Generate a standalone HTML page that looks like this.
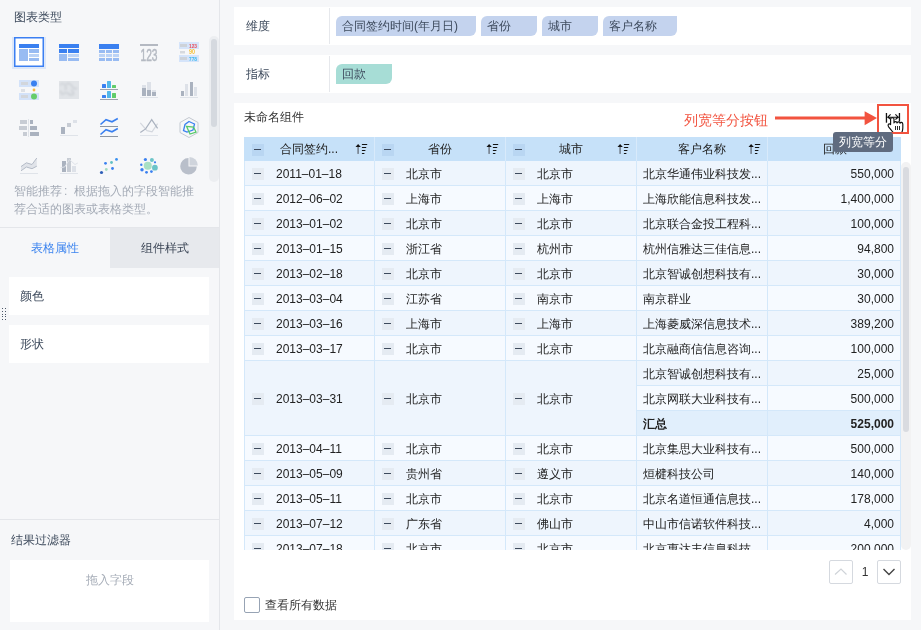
<!DOCTYPE html>
<html><head><meta charset="utf-8">
<style>
*{margin:0;padding:0;box-sizing:border-box}
html,body{width:921px;height:630px;overflow:hidden;background:#f6f7f9;font-family:"Liberation Sans",sans-serif;font-size:12px;color:#333}
.a{position:absolute}
.lbl{position:absolute;font-size:12px;line-height:16px;color:#3d4a5c;white-space:nowrap}
.panel{position:absolute;background:#fff}
.pill{position:absolute;top:16px;height:20px;line-height:20px;padding-left:6px;font-size:12px;color:#3e4b5e;background:#c4d3ee;border-radius:6px 0 6px 0;white-space:nowrap}
.tbl{position:absolute;left:244px;top:161px;width:657px;height:389px;overflow:hidden;background:#d4e8fa}
.c{position:absolute;overflow:hidden;white-space:nowrap;font-size:12px;color:#222}
.c span{top:1px}
.c .mb{position:absolute;left:7px;width:12px;height:12px;background:#e5ebf2}
.c .mb:after{content:"";position:absolute;left:2px;top:5px;width:7px;height:1px;background:#3d4a5c}
.t1{position:absolute;left:31px}
.t4{position:absolute;left:6px}
.t5{position:absolute;right:6px}
.b{font-weight:bold}
.hd{position:absolute;top:137px;height:24px;line-height:24px;background:#c6e1f9;font-size:12px;color:#222;white-space:nowrap;text-align:center}
.hd .mb{position:absolute;left:8px;top:7px;width:12px;height:12px;background:#b9d6f2}
.hd .mb:after{content:"";position:absolute;left:2px;top:5px;width:7px;height:1px;background:#3d4a5c}
.sort{position:absolute;top:6px;width:13px;height:12px}
</style></head><body><div id="root" style="position:absolute;left:0;top:0;width:921px;height:630px;overflow:hidden;will-change:transform">
<!-- LEFT PANEL -->
<div class="a" style="left:219px;top:0;width:1px;height:630px;background:#e4e6ea"></div>
<div class="lbl" style="left:14px;top:9px">图表类型</div>
<!-- selected icon box -->
<div class="a" style="left:12px;top:37px;width:34px;height:32px;background:#dce7f9"></div>
<svg class="a" style="left:12px;top:35px" width="34" height="34"><rect x="2.75" y="2.75" width="28.5" height="28.5" fill="#fff" stroke="#3b7ff2" stroke-width="1.5"/></svg>
<svg class="a" style="left:0;top:0" width="219" height="190" viewBox="0 0 219 190">
 <!-- icon 1 -->
 <rect x="19" y="44" width="20" height="4" fill="#3a80f0"/>
 <rect x="19" y="49" width="9" height="12" fill="#98bbf2"/>
 <rect x="29" y="49" width="10" height="4" fill="#98bbf2"/>
 <rect x="29" y="54" width="10" height="3" fill="#bcd3f6"/>
 <rect x="29" y="58" width="10" height="3" fill="#98bbf2"/>
 <!-- icon 2 -->
 <rect x="59" y="44" width="20" height="4" fill="#3a80f0"/>
 <rect x="59" y="49" width="8" height="4" fill="#3a80f0"/>
 <rect x="68" y="49" width="11" height="4" fill="#3a80f0"/>
 <rect x="59" y="54" width="8" height="7" fill="#98bbf2"/>
 <rect x="68" y="54" width="11" height="3" fill="#bcd3f6"/>
 <rect x="68" y="58" width="11" height="3" fill="#98bbf2"/>
 <!-- icon 3 -->
 <rect x="99" y="44" width="20" height="5" fill="#3a80f0"/>
 <g fill="#98bbf2"><rect x="99" y="50" width="6" height="3"/><rect x="106" y="50" width="6" height="3"/><rect x="113" y="50" width="6" height="3"/>
 <rect x="99" y="58" width="6" height="3"/><rect x="106" y="58" width="6" height="3"/><rect x="113" y="58" width="6" height="3"/></g>
 <g fill="#bcd3f6"><rect x="99" y="54" width="6" height="3"/><rect x="106" y="54" width="6" height="3"/><rect x="113" y="54" width="6" height="3"/></g>
 <!-- icon 4: 123 -->
 <rect x="140" y="44" width="18" height="2" fill="#b4b9c2"/>
 <text x="149" y="60.5" text-anchor="middle" font-family="Liberation Sans" font-size="16" fill="#b4b9c2" stroke="#b4b9c2" stroke-width="0.5" textLength="17" lengthAdjust="spacingAndGlyphs">123</text>
 <!-- icon 5 -->
 <rect x="179" y="42" width="20" height="7" fill="#d5e4fa"/>
 <rect x="179" y="55" width="20" height="7" fill="#d5e4fa"/>
 <rect x="180" y="44" width="7" height="3" fill="#cdd2d9"/>
 <rect x="180" y="51" width="5" height="2.5" fill="#d6d9de"/>
 <rect x="180" y="57" width="7" height="3" fill="#cdd2d9"/>
 <text x="189" y="47.5" font-family="Liberation Sans" font-size="6" font-weight="bold" fill="#ea4f5c" textLength="8" lengthAdjust="spacingAndGlyphs">123</text>
 <text x="189" y="54" font-family="Liberation Sans" font-size="6.5" font-weight="bold" fill="#f5c13c" textLength="6" lengthAdjust="spacingAndGlyphs">90</text>
 <text x="189" y="60.8" font-family="Liberation Sans" font-size="6" font-weight="bold" fill="#3bb8ee" textLength="8" lengthAdjust="spacingAndGlyphs">778</text>
 <!-- icon 6 -->
 <rect x="19" y="80" width="20" height="7" fill="#d3e2f9"/>
 <rect x="19" y="93" width="20" height="7" fill="#d3e2f9"/>
 <rect x="21" y="82" width="7" height="3" fill="#d2d6dc"/>
 <rect x="21" y="89" width="4" height="3" fill="#dde0e5"/>
 <rect x="21" y="95" width="7" height="3" fill="#d2d6dc"/>
 <circle cx="34" cy="83.5" r="3" fill="#3a80f0"/>
 <circle cx="34" cy="90" r="1.4" fill="#f5b942"/>
 <circle cx="34" cy="96.5" r="3" fill="#66cc6a"/>
 <!-- icon 7: map -->
 <defs><filter id="bl" x="-20%" y="-20%" width="140%" height="140%"><feGaussianBlur stdDeviation="0.9"/></filter><clipPath id="mc"><rect x="59" y="81" width="20" height="18"/></clipPath></defs>
 <rect x="59" y="81" width="20" height="18" fill="#e1e4e8"/>
 <g clip-path="url(#mc)" filter="url(#bl)" fill="none" stroke="#c4c8ce" stroke-width="1.1">
  <path d="M60 85 q3 -3 5 0 q2 3 0 5 M66 84 q4 -2 6 2 q2 4 5 2 M62 95 q3 -4 7 -1 q2 2 5 0 M71 90 q3 1 2 4 M60 91 q2 1 1 3"/>
 </g>
 <!-- icon 8 -->
 <rect x="102" y="84" width="4" height="4" rx="0.5" fill="#3a80f0"/><rect x="107" y="81" width="4" height="7" rx="0.5" fill="#52b7ea"/><rect x="112" y="85" width="4" height="3" rx="0.5" fill="#62cc6a"/>
 <rect x="100" y="89" width="18" height="1" fill="#9aa2ad"/>
 <rect x="102" y="95" width="4" height="3" rx="0.5" fill="#3a80f0"/><rect x="107" y="91" width="4" height="7" rx="0.5" fill="#52b7ea"/><rect x="112" y="93" width="4" height="5" rx="0.5" fill="#62cc6a"/>
 <rect x="100" y="99" width="18" height="1" fill="#9aa2ad"/>
 <!-- icon 9 -->
 <rect x="142" y="85" width="4" height="3" fill="#dde1e8"/><rect x="142" y="88" width="4" height="8" fill="#aab2bf"/>
 <rect x="147" y="82" width="4" height="8" fill="#dde1e8"/><rect x="147" y="90" width="4" height="6" fill="#aab2bf"/>
 <rect x="152" y="90" width="4" height="2" fill="#dde1e8"/><rect x="152" y="92" width="4" height="4" fill="#aab2bf"/>
 <rect x="140" y="97" width="18" height="1" fill="#dfe3e9"/>
 <!-- icon 10 -->
 <rect x="181" y="91" width="3" height="5" fill="#aab2bf"/><rect x="185" y="84" width="3" height="12" fill="#dde1e8"/>
 <rect x="190" y="82" width="3" height="14" fill="#aab2bf"/><rect x="194" y="87" width="3" height="9" fill="#dde1e8"/>
 <rect x="180" y="97" width="18" height="1" fill="#dfe3e9"/>
 <!-- icon 11 -->
 <rect x="28" y="119" width="1" height="18" fill="#dfe3e9"/>
 <rect x="20" y="120" width="7" height="4" fill="#c7ccd4"/><rect x="19" y="126" width="8" height="4" fill="#c7ccd4"/><rect x="23" y="132" width="4" height="4" fill="#c7ccd4"/>
 <rect x="30" y="120" width="3" height="4" fill="#aab2bf"/><rect x="30" y="126" width="7" height="4" fill="#aab2bf"/><rect x="30" y="132" width="9" height="4" fill="#aab2bf"/>
 <!-- icon 12 -->
 <rect x="61" y="127" width="4" height="7" fill="#aab2bf"/><rect x="67" y="123" width="4" height="4" fill="#c7ccd4"/><rect x="73" y="120" width="4" height="3" fill="#dde1e8"/>
 <rect x="60" y="135" width="18" height="1" fill="#dfe3e9"/>
 <!-- icon 13 -->
 <path d="M100.5 124.5 L106 119.7 L112 121.8 L117.8 118.5" stroke="#3a80f0" stroke-width="1.6" fill="none"/>
 <rect x="100" y="126" width="18" height="1" fill="#8d96a3"/>
 <path d="M100.5 134.5 L106 129.7 L112 131.8 L117.8 128.5" stroke="#3a80f0" stroke-width="1.6" fill="none"/>
 <rect x="100" y="136" width="18" height="1" fill="#8d96a3"/>
 <!-- icon 14 -->
 <path d="M140.3 122.8 L147 130.6 L152 131.9 L157.6 123.6" stroke="#d3d7de" stroke-width="1.2" fill="none"/>
 <path d="M140.3 132.5 L145.6 128.9 L151.7 119.7 L157.6 128.4" stroke="#aab2bf" stroke-width="1.2" fill="none"/>
 <rect x="140" y="135" width="18" height="1" fill="#dfe3e9"/>
 <!-- icon 15 -->
 <polygon points="189,117.5 198,122.5 198,132.5 189,137.5 180,132.5 180,122.5" stroke="#c3c8d0" stroke-width="1" fill="none"/>
 <polygon points="189,121.5 194.5,124 193,130 187,132 183.5,130.5 185,124.5" stroke="#3a80f0" stroke-width="1.3" fill="none"/>
 <polygon points="186.5,126.3 193.5,127 196,132 190,134" stroke="#57c96a" stroke-width="1.3" fill="none"/>
 <!-- icon 16 -->
 <path d="M21 166.6 L26.4 162.8 L32 164.5 L36.8 158 L36.8 166.2 L32 168.7 L26.4 167 L21 170.8 Z" fill="#e0e3e9"/><path d="M21 166.6 L26.4 162.8 L32 164.5 L36.8 158 M36.8 166.2 L32 168.7 L26.4 167 L21 170.8" fill="none" stroke="#b3bac6" stroke-width="1"/>
 <rect x="20" y="173" width="18" height="1" fill="#dfe3e9"/>
 <!-- icon 17 -->
 <rect x="62" y="161" width="4" height="11" fill="#aab2bf"/><rect x="67" y="158" width="4" height="14" fill="#c7ccd4"/><rect x="72" y="166" width="4" height="6" fill="#dde1e8"/>
 <path d="M60.5 167.6 L64.6 167 L69.5 159.6 L75 164.5 L77.8 163" stroke="#dfe3e9" stroke-width="1" fill="none"/>
 <rect x="60" y="173" width="18" height="1" fill="#dfe3e9"/>
 <!-- icon 18 -->
 <circle cx="101.5" cy="172.5" r="1.6" fill="#2f5fb8"/><circle cx="106.3" cy="169.5" r="1.4" fill="#a6dcc0"/>
 <circle cx="105.5" cy="163.3" r="1.4" fill="#3a80f0"/><circle cx="111.5" cy="162.5" r="1.4" fill="#62c0c4"/>
 <circle cx="112.5" cy="168.5" r="1.4" fill="#3a80f0"/><circle cx="116.5" cy="159.4" r="1.4" fill="#3a90f0"/>
 <!-- icon 19 -->
 <circle cx="147.8" cy="165.8" r="4" fill="#a9e0c4"/><circle cx="154.9" cy="167.7" r="2.9" fill="#6cc4c8"/>
 <circle cx="151.9" cy="159.9" r="2" fill="#6cc4c8"/>
 <g fill="#3a80f0"><circle cx="145.4" cy="159.5" r="1.6"/><circle cx="155" cy="162.3" r="1.1"/><circle cx="141.3" cy="164.7" r="1.2"/><circle cx="142" cy="169.7" r="1.7"/><circle cx="146.5" cy="172.3" r="1.4"/><circle cx="151.4" cy="171.6" r="1.4"/></g>
 <!-- icon 20 -->
 <path d="M188.5 166.5 L188.5 158 A8.3 8.3 0 1 0 196.8 166.5 Z" fill="#b9bfca"/>
 <path d="M189.5 165.5 L189.5 157 A8.3 8.3 0 0 1 197.8 165.5 Z" fill="#cfd4dc"/>
</svg>
<!-- left scrollbar -->
<div class="a" style="left:209px;top:36px;width:10px;height:146px;background:#eceef1;border-radius:5px"></div>
<div class="a" style="left:211px;top:39px;width:6px;height:88px;background:#d5d9df;border-radius:3px"></div>
<div class="lbl" style="left:14px;top:182px;line-height:18px;color:#a4abb6;width:190px;white-space:normal">智能推荐<span style="display:inline-block;width:12px;padding-left:2px">:</span>根据拖入的字段智能推<br>荐合适的图表或表格类型。</div>
<!-- tabs -->
<div class="a" style="left:0;top:227px;width:219px;height:1px;background:#e4e6ea"></div>
<div class="a" style="left:110px;top:228px;width:109px;height:40px;background:#e7e9ed"></div>
<div class="lbl" style="left:0;top:240px;width:110px;text-align:center;color:#3c84ef">表格属性</div>
<div class="lbl" style="left:110px;top:240px;width:109px;text-align:center;color:#3d4757">组件样式</div>
<div class="panel" style="left:9px;top:277px;width:200px;height:38px"></div>
<div class="lbl" style="left:20px;top:288px">颜色</div>
<div class="panel" style="left:9px;top:325px;width:200px;height:38px"></div>
<div class="lbl" style="left:20px;top:336px">形状</div>
<!-- drag dots -->
<svg class="a" style="left:0;top:305px" width="9" height="18">
 <g fill="#4d5869"><rect x="2" y="3" width="1" height="1"/><rect x="5" y="3" width="1" height="1"/><rect x="2" y="6" width="1" height="1"/><rect x="5" y="6" width="1" height="1"/><rect x="2" y="9" width="1" height="1"/><rect x="5" y="9" width="1" height="1"/><rect x="2" y="11" width="1" height="1"/><rect x="5" y="11" width="1" height="1"/><rect x="2" y="14" width="1" height="1"/><rect x="5" y="14" width="1" height="1"/></g>
</svg>
<div class="a" style="left:0;top:519px;width:219px;height:1px;background:#e4e6ea"></div>
<div class="lbl" style="left:11px;top:532px">结果过滤器</div>
<div class="panel" style="left:10px;top:560px;width:199px;height:62px"></div>
<div class="lbl" style="left:10px;top:572px;width:199px;text-align:center;color:#a4abb6">拖入字段</div>

<!-- MAIN: dimension panel -->
<div class="panel" style="left:234px;top:7px;width:677px;height:38px"></div>
<div class="lbl" style="left:246px;top:18px">维度</div>
<div class="a" style="left:329px;top:8px;width:1px;height:36px;background:#e6e8ec"></div>
<div class="pill" style="left:336px;width:140px">合同签约时间(年月日)</div>
<div class="pill" style="left:481px;width:56px">省份</div>
<div class="pill" style="left:542px;width:56px">城市</div>
<div class="pill" style="left:603px;width:74px">客户名称</div>
<div class="panel" style="left:234px;top:55px;width:677px;height:38px"></div>
<div class="lbl" style="left:246px;top:66px">指标</div>
<div class="a" style="left:329px;top:56px;width:1px;height:36px;background:#e6e8ec"></div>
<div class="pill" style="left:336px;top:64px;width:56px;background:#a7ddd6">回款</div>

<!-- MAIN: table panel -->
<div class="panel" style="left:234px;top:103px;width:677px;height:517px"></div>
<div class="lbl" style="left:244px;top:109px;color:#333">未命名组件</div>

<!-- header -->
<div class="a" style="left:244px;top:137px;width:657px;height:24px;background:#c6e1f9"></div>
<div class="hd" style="left:244px;width:130px"><i class="mb"></i>合同签约...</div>
<div class="hd" style="left:375px;width:130px"><i class="mb" style="left:7px"></i>省份</div>
<div class="hd" style="left:506px;width:130px"><i class="mb" style="left:7px"></i>城市</div>
<div class="hd" style="left:637px;width:130px">客户名称</div>
<div class="hd" style="left:768px;width:133px">回款</div>
<div class="a" style="left:374px;top:137px;width:1px;height:24px;background:#d8eafb"></div>
<div class="a" style="left:505px;top:137px;width:1px;height:24px;background:#d8eafb"></div>
<div class="a" style="left:636px;top:137px;width:1px;height:24px;background:#d8eafb"></div>
<div class="a" style="left:767px;top:137px;width:1px;height:24px;background:#d8eafb"></div>
<!-- sort icons -->
<svg class="a" style="left:0;top:0" width="921" height="170">
 <defs><g id="srt">
  <path d="M2.6 0 L5.3 2.9 L0 2.9 Z" fill="#111"/><rect x="1.9" y="2.9" width="1.4" height="7" fill="#6a737f"/>
  <rect x="6.3" y="0" width="5.5" height="1.1" rx="0.5" fill="#111"/>
  <rect x="6.3" y="3" width="4.5" height="1.1" rx="0.5" fill="#111"/>
  <rect x="6.3" y="6" width="3.7" height="1.1" rx="0.5" fill="#111"/>
  <rect x="6.3" y="9" width="2.7" height="1.1" rx="0.5" fill="#111"/>
 </g></defs>
 <use href="#srt" x="355.5" y="144"/>
 <use href="#srt" x="486.5" y="144"/>
 <use href="#srt" x="617.5" y="144"/>
 <use href="#srt" x="748.5" y="144"/>
</svg>

<div class="tbl">
<div style="position:absolute;left:-244px;top:-161px;width:921px;height:630px">
<div class="c" style="left:245px;top:161px;width:129px;height:24px;background:#eef5fd;line-height:24px"><i class="mb" style="top:7px"></i><span class="t1">2011–01–18</span></div>
<div class="c" style="left:375px;top:161px;width:130px;height:24px;background:#eef5fd;line-height:24px"><i class="mb" style="top:7px"></i><span class="t1">北京市</span></div>
<div class="c" style="left:506px;top:161px;width:130px;height:24px;background:#eef5fd;line-height:24px"><i class="mb" style="top:7px"></i><span class="t1">北京市</span></div>
<div class="c" style="left:637px;top:161px;width:130px;height:24px;background:#eef5fd;line-height:24px"><span class="t4">北京华通伟业科技发...</span></div>
<div class="c" style="left:768px;top:161px;width:132px;height:24px;background:#eef5fd;line-height:24px"><span class="t5">550,000</span></div>
<div class="c" style="left:245px;top:186px;width:129px;height:24px;background:#f6faff;line-height:24px"><i class="mb" style="top:7px"></i><span class="t1">2012–06–02</span></div>
<div class="c" style="left:375px;top:186px;width:130px;height:24px;background:#f6faff;line-height:24px"><i class="mb" style="top:7px"></i><span class="t1">上海市</span></div>
<div class="c" style="left:506px;top:186px;width:130px;height:24px;background:#f6faff;line-height:24px"><i class="mb" style="top:7px"></i><span class="t1">上海市</span></div>
<div class="c" style="left:637px;top:186px;width:130px;height:24px;background:#f6faff;line-height:24px"><span class="t4">上海欣能信息科技发...</span></div>
<div class="c" style="left:768px;top:186px;width:132px;height:24px;background:#f6faff;line-height:24px"><span class="t5">1,400,000</span></div>
<div class="c" style="left:245px;top:211px;width:129px;height:24px;background:#eef5fd;line-height:24px"><i class="mb" style="top:7px"></i><span class="t1">2013–01–02</span></div>
<div class="c" style="left:375px;top:211px;width:130px;height:24px;background:#eef5fd;line-height:24px"><i class="mb" style="top:7px"></i><span class="t1">北京市</span></div>
<div class="c" style="left:506px;top:211px;width:130px;height:24px;background:#eef5fd;line-height:24px"><i class="mb" style="top:7px"></i><span class="t1">北京市</span></div>
<div class="c" style="left:637px;top:211px;width:130px;height:24px;background:#eef5fd;line-height:24px"><span class="t4">北京联合金投工程科...</span></div>
<div class="c" style="left:768px;top:211px;width:132px;height:24px;background:#eef5fd;line-height:24px"><span class="t5">100,000</span></div>
<div class="c" style="left:245px;top:236px;width:129px;height:24px;background:#f6faff;line-height:24px"><i class="mb" style="top:7px"></i><span class="t1">2013–01–15</span></div>
<div class="c" style="left:375px;top:236px;width:130px;height:24px;background:#f6faff;line-height:24px"><i class="mb" style="top:7px"></i><span class="t1">浙江省</span></div>
<div class="c" style="left:506px;top:236px;width:130px;height:24px;background:#f6faff;line-height:24px"><i class="mb" style="top:7px"></i><span class="t1">杭州市</span></div>
<div class="c" style="left:637px;top:236px;width:130px;height:24px;background:#f6faff;line-height:24px"><span class="t4">杭州信雅达三佳信息...</span></div>
<div class="c" style="left:768px;top:236px;width:132px;height:24px;background:#f6faff;line-height:24px"><span class="t5">94,800</span></div>
<div class="c" style="left:245px;top:261px;width:129px;height:24px;background:#eef5fd;line-height:24px"><i class="mb" style="top:7px"></i><span class="t1">2013–02–18</span></div>
<div class="c" style="left:375px;top:261px;width:130px;height:24px;background:#eef5fd;line-height:24px"><i class="mb" style="top:7px"></i><span class="t1">北京市</span></div>
<div class="c" style="left:506px;top:261px;width:130px;height:24px;background:#eef5fd;line-height:24px"><i class="mb" style="top:7px"></i><span class="t1">北京市</span></div>
<div class="c" style="left:637px;top:261px;width:130px;height:24px;background:#eef5fd;line-height:24px"><span class="t4">北京智诚创想科技有...</span></div>
<div class="c" style="left:768px;top:261px;width:132px;height:24px;background:#eef5fd;line-height:24px"><span class="t5">30,000</span></div>
<div class="c" style="left:245px;top:286px;width:129px;height:24px;background:#f6faff;line-height:24px"><i class="mb" style="top:7px"></i><span class="t1">2013–03–04</span></div>
<div class="c" style="left:375px;top:286px;width:130px;height:24px;background:#f6faff;line-height:24px"><i class="mb" style="top:7px"></i><span class="t1">江苏省</span></div>
<div class="c" style="left:506px;top:286px;width:130px;height:24px;background:#f6faff;line-height:24px"><i class="mb" style="top:7px"></i><span class="t1">南京市</span></div>
<div class="c" style="left:637px;top:286px;width:130px;height:24px;background:#f6faff;line-height:24px"><span class="t4">南京群业</span></div>
<div class="c" style="left:768px;top:286px;width:132px;height:24px;background:#f6faff;line-height:24px"><span class="t5">30,000</span></div>
<div class="c" style="left:245px;top:311px;width:129px;height:24px;background:#eef5fd;line-height:24px"><i class="mb" style="top:7px"></i><span class="t1">2013–03–16</span></div>
<div class="c" style="left:375px;top:311px;width:130px;height:24px;background:#eef5fd;line-height:24px"><i class="mb" style="top:7px"></i><span class="t1">上海市</span></div>
<div class="c" style="left:506px;top:311px;width:130px;height:24px;background:#eef5fd;line-height:24px"><i class="mb" style="top:7px"></i><span class="t1">上海市</span></div>
<div class="c" style="left:637px;top:311px;width:130px;height:24px;background:#eef5fd;line-height:24px"><span class="t4">上海菱威深信息技术...</span></div>
<div class="c" style="left:768px;top:311px;width:132px;height:24px;background:#eef5fd;line-height:24px"><span class="t5">389,200</span></div>
<div class="c" style="left:245px;top:336px;width:129px;height:24px;background:#f6faff;line-height:24px"><i class="mb" style="top:7px"></i><span class="t1">2013–03–17</span></div>
<div class="c" style="left:375px;top:336px;width:130px;height:24px;background:#f6faff;line-height:24px"><i class="mb" style="top:7px"></i><span class="t1">北京市</span></div>
<div class="c" style="left:506px;top:336px;width:130px;height:24px;background:#f6faff;line-height:24px"><i class="mb" style="top:7px"></i><span class="t1">北京市</span></div>
<div class="c" style="left:637px;top:336px;width:130px;height:24px;background:#f6faff;line-height:24px"><span class="t4">北京融商信信息咨询...</span></div>
<div class="c" style="left:768px;top:336px;width:132px;height:24px;background:#f6faff;line-height:24px"><span class="t5">100,000</span></div>
<div class="c" style="left:245px;top:361px;width:129px;height:74px;background:#eef5fd;line-height:74px"><i class="mb" style="top:32px"></i><span class="t1">2013–03–31</span></div>
<div class="c" style="left:375px;top:361px;width:130px;height:74px;background:#eef5fd;line-height:74px"><i class="mb" style="top:32px"></i><span class="t1">北京市</span></div>
<div class="c" style="left:506px;top:361px;width:130px;height:74px;background:#eef5fd;line-height:74px"><i class="mb" style="top:32px"></i><span class="t1">北京市</span></div>
<div class="c" style="left:637px;top:361px;width:130px;height:24px;background:#eef5fd;line-height:24px"><span class="t4">北京智诚创想科技有...</span></div>
<div class="c" style="left:768px;top:361px;width:132px;height:24px;background:#eef5fd;line-height:24px"><span class="t5">25,000</span></div>
<div class="c" style="left:637px;top:386px;width:130px;height:24px;background:#f6faff;line-height:24px"><span class="t4">北京网联大业科技有...</span></div>
<div class="c" style="left:768px;top:386px;width:132px;height:24px;background:#f6faff;line-height:24px"><span class="t5">500,000</span></div>
<div class="c" style="left:637px;top:411px;width:130px;height:24px;background:#e1effc;line-height:24px"><span class="t4 b">汇总</span></div>
<div class="c" style="left:768px;top:411px;width:132px;height:24px;background:#e1effc;line-height:24px"><span class="t5 b">525,000</span></div>
<div class="c" style="left:245px;top:436px;width:129px;height:24px;background:#f6faff;line-height:24px"><i class="mb" style="top:7px"></i><span class="t1">2013–04–11</span></div>
<div class="c" style="left:375px;top:436px;width:130px;height:24px;background:#f6faff;line-height:24px"><i class="mb" style="top:7px"></i><span class="t1">北京市</span></div>
<div class="c" style="left:506px;top:436px;width:130px;height:24px;background:#f6faff;line-height:24px"><i class="mb" style="top:7px"></i><span class="t1">北京市</span></div>
<div class="c" style="left:637px;top:436px;width:130px;height:24px;background:#f6faff;line-height:24px"><span class="t4">北京集思大业科技有...</span></div>
<div class="c" style="left:768px;top:436px;width:132px;height:24px;background:#f6faff;line-height:24px"><span class="t5">500,000</span></div>
<div class="c" style="left:245px;top:461px;width:129px;height:24px;background:#eef5fd;line-height:24px"><i class="mb" style="top:7px"></i><span class="t1">2013–05–09</span></div>
<div class="c" style="left:375px;top:461px;width:130px;height:24px;background:#eef5fd;line-height:24px"><i class="mb" style="top:7px"></i><span class="t1">贵州省</span></div>
<div class="c" style="left:506px;top:461px;width:130px;height:24px;background:#eef5fd;line-height:24px"><i class="mb" style="top:7px"></i><span class="t1">遵义市</span></div>
<div class="c" style="left:637px;top:461px;width:130px;height:24px;background:#eef5fd;line-height:24px"><span class="t4">烜楗科技公司</span></div>
<div class="c" style="left:768px;top:461px;width:132px;height:24px;background:#eef5fd;line-height:24px"><span class="t5">140,000</span></div>
<div class="c" style="left:245px;top:486px;width:129px;height:24px;background:#f6faff;line-height:24px"><i class="mb" style="top:7px"></i><span class="t1">2013–05–11</span></div>
<div class="c" style="left:375px;top:486px;width:130px;height:24px;background:#f6faff;line-height:24px"><i class="mb" style="top:7px"></i><span class="t1">北京市</span></div>
<div class="c" style="left:506px;top:486px;width:130px;height:24px;background:#f6faff;line-height:24px"><i class="mb" style="top:7px"></i><span class="t1">北京市</span></div>
<div class="c" style="left:637px;top:486px;width:130px;height:24px;background:#f6faff;line-height:24px"><span class="t4">北京名道恒通信息技...</span></div>
<div class="c" style="left:768px;top:486px;width:132px;height:24px;background:#f6faff;line-height:24px"><span class="t5">178,000</span></div>
<div class="c" style="left:245px;top:511px;width:129px;height:24px;background:#eef5fd;line-height:24px"><i class="mb" style="top:7px"></i><span class="t1">2013–07–12</span></div>
<div class="c" style="left:375px;top:511px;width:130px;height:24px;background:#eef5fd;line-height:24px"><i class="mb" style="top:7px"></i><span class="t1">广东省</span></div>
<div class="c" style="left:506px;top:511px;width:130px;height:24px;background:#eef5fd;line-height:24px"><i class="mb" style="top:7px"></i><span class="t1">佛山市</span></div>
<div class="c" style="left:637px;top:511px;width:130px;height:24px;background:#eef5fd;line-height:24px"><span class="t4">中山市信诺软件科技...</span></div>
<div class="c" style="left:768px;top:511px;width:132px;height:24px;background:#eef5fd;line-height:24px"><span class="t5">4,000</span></div>
<div class="c" style="left:245px;top:536px;width:129px;height:24px;background:#f6faff;line-height:24px"><i class="mb" style="top:7px"></i><span class="t1">2013–07–18</span></div>
<div class="c" style="left:375px;top:536px;width:130px;height:24px;background:#f6faff;line-height:24px"><i class="mb" style="top:7px"></i><span class="t1">北京市</span></div>
<div class="c" style="left:506px;top:536px;width:130px;height:24px;background:#f6faff;line-height:24px"><i class="mb" style="top:7px"></i><span class="t1">北京市</span></div>
<div class="c" style="left:637px;top:536px;width:130px;height:24px;background:#f6faff;line-height:24px"><span class="t4">北京惠达丰信息科技...</span></div>
<div class="c" style="left:768px;top:536px;width:132px;height:24px;background:#f6faff;line-height:24px"><span class="t5">200,000</span></div>
</div>
</div>
<!-- table scrollbar -->
<div class="a" style="left:901px;top:162px;width:10px;height:388px;background:#f2f2f3;border-radius:5px"></div>
<div class="a" style="left:903px;top:167px;width:6px;height:265px;background:#d9dbe0;border-radius:3px"></div>

<!-- pagination -->
<div class="a" style="left:829px;top:560px;width:24px;height:24px;border:1px solid #d5d9df;border-radius:2px;background:#fff"></div>
<svg class="a" style="left:829px;top:560px" width="24" height="24"><path d="M6 14.5 L12 9 L17.5 14.5" stroke="#cfd3d8" stroke-width="1.2" fill="none"/></svg>
<div class="a" style="left:859px;top:564px;width:12px;line-height:16px;text-align:center;font-size:12px;color:#333">1</div>
<div class="a" style="left:877px;top:560px;width:24px;height:24px;border:1px solid #d5d9df;border-radius:2px;background:#fff"></div>
<svg class="a" style="left:877px;top:560px" width="24" height="24"><path d="M6.5 9 L12 14.5 L17.5 9" stroke="#444" stroke-width="1.4" fill="none"/></svg>

<!-- checkbox -->
<div class="a" style="left:244px;top:597px;width:16px;height:16px;border:1px solid #97a3b4;border-radius:2px;background:#fff"></div>
<div class="lbl" style="left:265px;top:597px;color:#333">查看所有数据</div>

<!-- annotation -->
<div class="a" style="left:684px;top:110px;font-size:14px;line-height:20px;color:#f2533f;white-space:nowrap">列宽等分按钮</div>
<svg class="a" style="left:770px;top:100px" width="151" height="40">
 <rect x="5" y="16.5" width="96" height="3" fill="#f2533f"/>
 <path d="M94.6 11.2 L107 18 L94.6 25.3 Z" fill="#f2533f"/>
 <rect x="108" y="5" width="30" height="28" fill="none" stroke="#f2533f" stroke-width="2"/>
</svg>
<!-- tooltip -->
<div class="a" style="left:833px;top:132px;width:60px;height:20px;background:#5f6b7f;border-radius:3px;color:#fff;font-size:12px;line-height:20px;text-align:center">列宽等分</div>
<!-- cursor icon -->
<svg class="a" style="left:879px;top:106px" width="28" height="26" viewBox="0 0 28 26">
 <rect x="6.8" y="7" width="1.3" height="9.7" fill="#111"/>
 <rect x="19.8" y="7" width="1.3" height="8.5" fill="#111"/>
 <path d="M8.2 11.2 L20 11.2 M11.6 8.3 L8.8 11.2 L11.6 13.4 M16.4 8.3 L19.2 11.2 L16.4 13.5" stroke="#111" stroke-width="1.1" fill="none"/>
 <path d="M11.6 13 Q11.6 11.6 13.3 11.6 Q15 11.6 15 13 L15 17 Q15.2 15.6 16.6 15.6 Q18 15.6 18 17 Q18.3 15.8 19.6 15.8 Q21 15.8 21 17.2 Q21.4 16.2 22.6 16.4 Q23.8 16.7 23.8 18.2 L23.8 22 Q23.8 24.2 22.8 26.5 L14.2 26.5 L9.6 20.8 Q8.6 19.2 9.6 18.1 Q10.8 17.4 11.6 18.6 Z" fill="#fff" stroke="#111" stroke-width="1.15" stroke-linejoin="round"/>
 <path d="M16.5 20 L16.5 24 M18.5 20 L18.5 24 M20.5 20 L20.5 24" stroke="#111" stroke-width="0.9"/>
</svg>
</div></body></html>
